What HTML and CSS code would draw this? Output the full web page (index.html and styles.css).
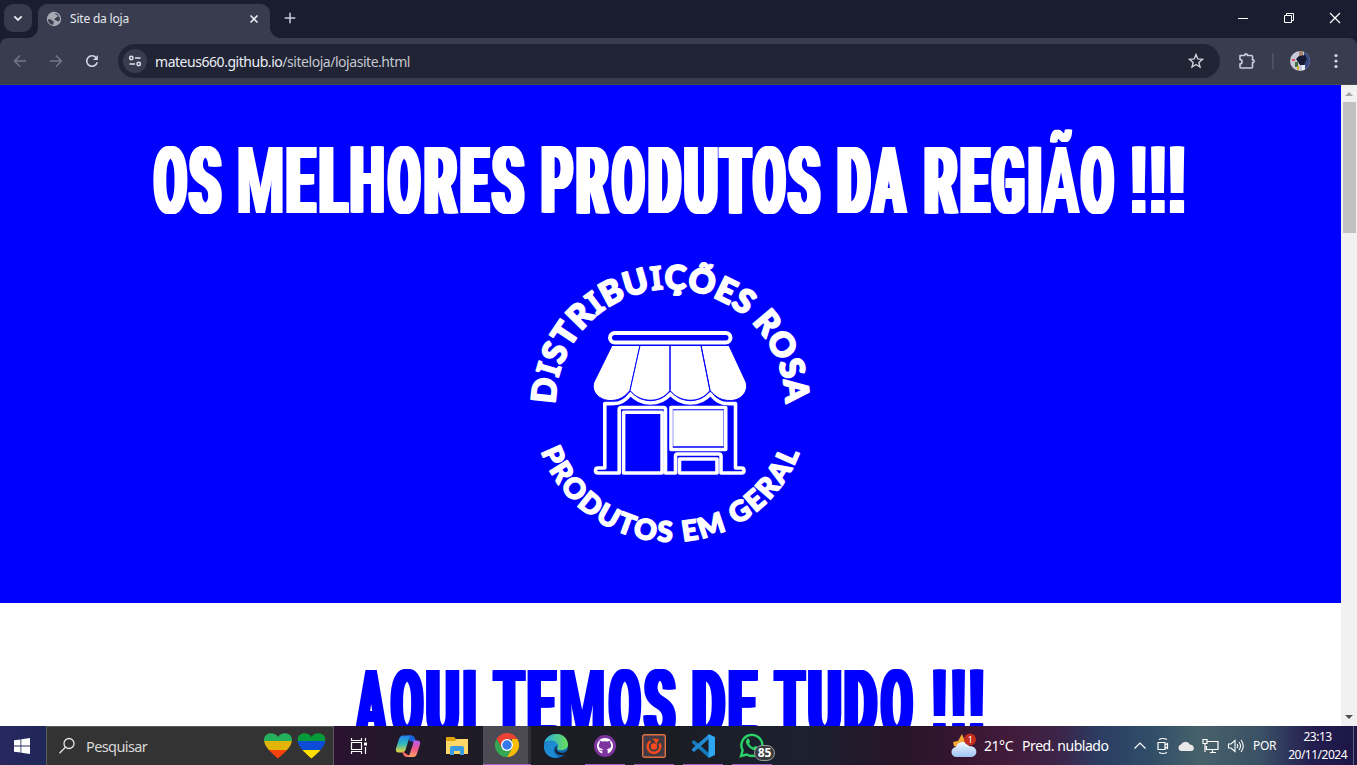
FILE: index.html
```html
<!DOCTYPE html>
<html lang="pt-BR">
<head>
<meta charset="utf-8">
<title>Site da loja</title>
<link rel="stylesheet" href="styles.css">
</head>
<body>
<div class="desktop">
  <header class="tabstrip">
    <div class="tab-search"><svg width="28" height="28" viewBox="0 0 28 28"><path d="M10.300 12.300l3.700 3.700 3.700-3.700" fill="none" stroke="#e6e8ee" stroke-width="1.900"/></svg></div>
    <div class="tab">
      <svg class="globe" width="16" height="16" viewBox="0 0 16 16"><circle cx="8" cy="8" r="7.200" fill="#a6a9b0"/><path d="M2 8.200c2 .1 3.800.2 4.200 1.200.3.900 1.900.6 1.700 1.900-.2.900-.8 1.100-.7 2.500C4 13.600 1.800 11 2 8.200zM8 2.300c2.200 0 3.600.8 4.600 2.300-.5 1.400-1.600.9-2.200 2-.5 1-2 .4-2 1.700 0 1.100 2 .7 2.700 1.600.4.600 1.300.3 2.100.4.800-1.300.9-3 .2-4.600" fill="#3a3e4e"/></svg>
      <span class="tab-title">Site da loja</span>
      <svg class="tab-close" width="10" height="10" viewBox="0 0 10 10"><path d="M1.500 1.500l7 7m0-7l-7 7" stroke="#e6e8ee" stroke-width="1.600"/></svg>
    </div>
    <svg class="new-tab" width="12" height="12" viewBox="0 0 12 12"><path d="M6 .7v10.600M.7 6h10.600" stroke="#c9cde0" stroke-width="1.500"/></svg>
    <div class="window-buttons">
      <svg width="12" height="12" viewBox="0 0 12 12"><path d="M1 6.500h10" stroke="#fff"/></svg>
      <svg width="12" height="12" viewBox="0 0 12 12"><path d="M1.500 3.500h7v7h-7zM3.500 3.500v-2h7v7h-2" fill="none" stroke="#fff"/></svg>
      <svg width="12" height="12" viewBox="0 0 12 12"><path d="M1 1l10 10m0-10L1 11" stroke="#fff" stroke-width="1.200"/></svg>
    </div>
  </header>
  <nav class="toolbar">
    <div class="nav-icons">
      <svg width="14" height="14" viewBox="0 0 14 14"><path d="M13 7H2M7 1.500L1.500 7 7 12.500" fill="none" stroke="#73778a" stroke-width="1.500"/></svg>
      <svg width="14" height="14" viewBox="0 0 14 14"><path d="M1 7h11M7 1.500L12.500 7 7 12.500" fill="none" stroke="#73778a" stroke-width="1.500"/></svg>
      <svg width="14" height="14" viewBox="0 0 14 14"><path d="M12.200 8.200A5.300 5.300 0 1 1 11.200 3.700L12 4.700" fill="none" stroke="#cfd3e4" stroke-width="1.600"/><path d="M12.900 1v4.900H8z" fill="#cfd3e4"/></svg>
    </div>
    <div class="omnibox">
      <div class="site-info"><svg width="14" height="14" viewBox="0 0 14 14" fill="none" stroke="#e1e4ee" stroke-width="1.500"><circle cx="3.300" cy="4" r="1.700"/><path d="M7 4h5.500M1.500 10H7"/><circle cx="10.700" cy="10" r="1.700"/></svg></div>
      <span class="url">mateus660.github.io<span class="url-path">/siteloja/lojasite.html</span></span>
      <svg class="star" width="16" height="16" viewBox="0 0 16 16"><path d="M8 1.600l1.800 4.300 4.700.4-3.600 3.100 1.100 4.600L8 11.500 4 14l1.100-4.600L1.500 6.300l4.700-.4z" fill="none" stroke="#d0d3dc" stroke-width="1.400"/></svg>
    </div>
    <svg class="puzzle" width="18" height="18" viewBox="0 0 18 18"><path d="M2 3.500h4.700V2.600q1.300-1.500 2.600 0v.9H13.500q1 0 1 1v3.400h.9q1.500 1.300 0 2.600h-.9V15q0 1-1 1H3q-1 0-1-1v-3.200a2 2 0 0 0 0-4.200z" fill="none" stroke="#c9cde0" stroke-width="1.600" stroke-linejoin="round"/></svg>
    <span class="divider"></span>
    <svg class="avatar" width="20" height="20" viewBox="0 0 20 20"><defs><clipPath id="face"><circle cx="10" cy="10" r="10"/></clipPath></defs><g clip-path="url(#face)"><path fill="#c9c8d8" d="M0 0h20v20H0z"/><path fill="#394a83" d="M14 0h6v20h-6z"/><path fill="#a88370" d="M9 0h4v6H9z"/><path fill="#171b36" d="M9 5l6-1 2 4-3 6-4 0-4-6z"/><path fill="#d65361" d="M2 8h3v2H2zM5 13h2v2H5z"/><path fill="#3e703b" d="M5 11h3v5H5z"/><path fill="#d5b42c" d="M7 15h2v4H7z"/><path fill="#eceef7" d="M12 14h3v6h-3z"/></g></svg>
    <svg class="dots" width="4" height="16" viewBox="0 0 4 16" fill="#d5d8e4"><circle cx="2" cy="2.500" r="1.600"/><circle cx="2" cy="8" r="1.600"/><circle cx="2" cy="13.500" r="1.600"/></svg>
  </nav>
  <div class="viewport">
    <main class="page">
      <section class="hero">
        <h1 class="poster poster-hero" id="hero-title"></h1>
        <svg class="logo" width="310" height="310" viewBox="515 250 310 310">
          <defs>
            <path id="arc-top" d="M555.500 404A115 115 0 0 1 785.500 404"/>
            <path id="arc-bottom" d="M541 451.500A138 138 0 0 0 800 451.500"/>
          </defs>
          <text class="ring ring-top"><textPath href="#arc-top" textLength="360">D<tspan class="slab">I</tspan>STR<tspan class="slab">I</tspan>BU<tspan class="slab">I</tspan>ÇÕES ROSA</textPath></text>
          <text class="ring ring-bottom"><textPath href="#arc-bottom" textLength="334">PRODUTOS EM GERAL</textPath></text>
          <g fill="none" stroke="#fff" stroke-width="3.600" stroke-linejoin="round">
            <rect x="610" y="333" width="120.500" height="9.500" rx="4.700" stroke-width="4"/>
            <path d="M604.800 403.500V468H598q-2.500 0-2.500 2.500t2.500 2.500H619.200V409.500q0-2 2-2H663.500q2 0 2 2V473h10V456q0-2 2-2h41.500q2 0 2 2v17h20.500q2.500 0 2.500-2.500t-2.500-2.500h-6V403.500q-8 .5-13-.500-7-2-12-9-8 9-20 9t-20-9q-8 9-20 9t-20-9q-5 7-12 9-6 1-13.700.5z"/>
            <path d="M671 407.500h54.700v42H671z"/>
            <path d="M623.600 473V412.200h38.500V473zM679.500 473v-14h37.500v14z"/>
          </g>
          <path fill="#fff" d="M673.200 410.200h50.300v36h-50.300z"/>
          <path fill="#fff" stroke="#00f" d="M612 345.500H640L630 390.500C623 399 617 400.500 610 400.500 600 400.500 590.500 392 594 382z"/>
          <path fill="#fff" stroke="#00f" d="M640 345.500h30v45C660 404 640 403 630 390.500zM670 345.500h31l9 45C700 404 680 403 670 390.500zM701 345.500h28l17 36.500c3 10-5.500 18.500-15.500 18.500-8 0-13.500-2-20.500-10z"/>
        </svg>
      </section>
      <section class="offers"><h2 class="poster poster-offers" id="offers-title"></h2></section>
    </main>
    <div class="scrollbar"><i class="arrow-up"></i><i class="thumb"></i><i class="arrow-down"></i></div>
  </div>
  <footer class="taskbar">
    <div class="start"><svg width="16" height="16" viewBox="0 0 16 16" fill="#fff"><path d="M0 2.300l6.500-.9v6.200H0zM7.300 1.300L16 0v7.600H7.300zM0 8.400h6.500v6.200L0 13.700zM7.300 8.400H16V16l-8.700-1.200z"/></svg></div>
    <div class="search">
      <svg width="18" height="18" viewBox="0 0 18 18" fill="none" stroke="#e4e4e4" stroke-width="1.300"><circle cx="11" cy="6.500" r="5"/><path d="M7.400 10.200L1.500 16.200"/></svg>
      <span class="search-label">Pesquisar</span>
      <svg class="hearts" width="64" height="28" viewBox="0 0 64 28"><defs><clipPath id="heart"><path d="M15 26.500C10 22 1 15 1 8 1 0 12-.5 15 5c3-5.500 14-5 14 3 0 7-9 14-14 18.500z"/></clipPath></defs><g clip-path="url(#heart)"><path fill="#25b15b" d="M0 0h30v9H0z"/><path fill="#e0b408" d="M0 9h30v9H0z"/><path fill="#f9430d" d="M0 18h30v10H0z"/></g><g transform="translate(33.500)" clip-path="url(#heart)"><path fill="#069b38" d="M0 0h30v9H0z"/><path fill="#0d4cd5" d="M0 9h30v9H0z"/><path fill="#ffe000" d="M0 18h30v10H0z"/></g></svg>
    </div>
    <div class="apps">
      <div class="app"><svg width="18" height="16" viewBox="0 0 18 16" fill="none" stroke="#fff" stroke-width="1.200"><path d="M1.500 0v2.500h10V0M1.500 16v-2.500h10V16M1.500 4.500h10v7h-10zM15.500 0v3M15.500 9v7"/><path d="M14 4.500h3v3h-3z" fill="#fff" stroke="none"/></svg></div>
      <div class="app"><svg width="26" height="24" viewBox="0 0 26 24"><defs><linearGradient id="cp1" x2="0" y2="1"><stop stop-color="#2080ef"/><stop offset=".5" stop-color="#32b9bc"/><stop offset="1" stop-color="#f1d336"/></linearGradient><linearGradient id="cp2" x2="0" y2="1"><stop stop-color="#b75cf4"/><stop offset=".5" stop-color="#ee578c"/><stop offset="1" stop-color="#ffa45e"/></linearGradient></defs><path fill="#1b5ed9" d="M12 1.500h5q2 0 3 3l1 3h-6z"/><path fill="url(#cp1)" d="M8 1.500h9q-2 0-3 3l-3 10q-1 4-4 4H4q-4 0-3-4L4 5q1-3.500 4-3.500z"/><path fill="#f56a62" d="M7 17l1 3q1 3 3 3h5z"/><path fill="url(#cp2)" d="M18 6.500h4q4 0 3 4l-3 9q-1 3.500-4 3.500h-7q3 0 4-4l3-9q1-3 0-3.500z"/></svg></div>
      <div class="app"><svg width="22" height="20" viewBox="0 0 22 20"><path fill="#e3a30c" d="M0 1h8l2 2h12v5H0z"/><path fill="#ffd768" d="M0 5h9l2-2h11v15H0z"/><path fill="#3a9be3" d="M4 19v-7q0-2 2-2h10q2 0 2 2v7h-4v-4H8v4z"/></svg></div>
      <div class="app active"><svg width="24" height="24" viewBox="0 0 24 24"><path fill="#ea4335" d="M1.600 6A12 12 0 0 1 22.400 6H12L7 15z"/><path fill="#fbbc05" d="M22.400 6A12 12 0 0 1 12 24l5.200-9L17 6z"/><path fill="#34a853" d="M12 24A12 12 0 0 1 1.600 6l5.200 9L12 18l5.200-3z"/><circle cx="12" cy="12" r="6" fill="#fff"/><circle cx="12" cy="12" r="4.700" fill="#3478e8"/></svg></div>
      <div class="app"><svg width="24" height="24" viewBox="0 0 24 24"><defs><linearGradient id="ed"><stop stop-color="#28a8e0"/><stop offset="1" stop-color="#68df5b"/></linearGradient></defs><circle cx="12" cy="12" r="12" fill="#1266b5"/><path fill="url(#ed)" d="M0 10C2-3 22-4 24 10c0 5-4 7-9 6-3-1-1-2-1-4C13 6 3 5 0 10z"/><path fill="#1c8bd2" d="M0 11c3-6 13-5 14 1-5-1-7 8 1 11C7 26-1 20 0 11z"/><path fill="#1c1d25" d="M13.500 12c-2 2-1.500 5.500 2.500 6.500 3 1 6-.5 7-1.500l1 0v3l-2 0c-4 2-11 1-11-4 0-2 1-4 2.500-4z"/></svg></div>
      <div class="app open"><svg width="22" height="22" viewBox="0 0 22 22"><circle cx="11" cy="11" r="11" fill="#7b359d"/><path fill="#fff" d="M8.300 18.500A8 8 0 1 1 13.700 18.500V15.800l-.6-1.600c5-.8 4.700-4.400 3.200-6.200l0-2.400-2.400 1q-2.900-.7-5.800 0l-2.400-1 0 2.400c-1.500 1.800-1.800 5.400 3.200 6.200l-.6 1.200c-1.500.3-2-.8-3-1.600 .5 1.500 1.200 2.900 3 2.500z"/></svg></div>
      <div class="app open"><svg width="24" height="24" viewBox="0 0 24 24"><rect x=".7" y=".7" width="22.600" height="22.600" rx="2" fill="#443a44" stroke="#e17042" stroke-width="1.400"/><path d="M8.500 7.200A6.300 6.300 0 1 0 17.500 9.500" fill="none" stroke="#ff4b1c" stroke-width="2.400"/><circle cx="12" cy="12.500" r="3.200" fill="#ff4b1c"/><path d="M10.500 4.500l6.500.5-2.500 5z" fill="#ff4b1c"/></svg></div>
      <div class="app open"><svg width="24" height="24" viewBox="0 0 24 24"><path d="M1 7.500l2-1.500L19 20l-1 4L1 9z" fill="#1679bd"/><path d="M1 16.500L3 18 19 4l-1-4L1 15z" fill="#2189cf"/><path d="M17.500 0L24 3v18l-6.500 3z" fill="#2ea6ef"/></svg></div>
      <div class="app open whatsapp"><svg width="25" height="25" viewBox="0 0 25 25"><path d="M2 23l1.600-5.700A10.500 10.500 0 1 1 7.700 21.500z" fill="none" stroke="#29d366" stroke-width="2.400"/><path d="M7.500 7c1-2 2.400-1.600 2.800-.3l.7 1.800c.2.900-.5 1.300-1 2 1 2 2.500 3.200 4.500 4 1-1 1.400-2 2.600-1.300l1.900 1c.8.500-.3 2.600-1.700 3.100-3.600 1-9.300-3.700-10.300-7.700-.2-1 0-2 .5-2.600z" fill="#29d366"/></svg><span class="badge">85</span></div>
    </div>
    <div class="weather">
      <svg width="26" height="26" viewBox="0 0 26 26"><defs><linearGradient id="cl" x2="0" y2="1"><stop stop-color="#f4f8ff"/><stop offset="1" stop-color="#9dc2f1"/></linearGradient></defs><path d="M11 1l2 5 3 6-8 3-5-2-1-4 5-1z" fill="#f5a936"/><path d="M6 24a5 5 0 0 1-1-10 7 7 0 0 1 13-1c10 0 9 11 2 11z" fill="url(#cl)"/><circle cx="19" cy="6.500" r="6" fill="#c42b1c"/><text x="19" y="10" class="alert">1</text></svg>
      <span class="temp">21°C</span><span class="forecast">Pred. nublado</span>
    </div>
    <div class="tray">
      <svg width="14" height="18" viewBox="0 0 14 18" fill="none" stroke="#fff" stroke-width="1.200"><path d="M1.500 11.500L7 6l5.500 5.500"/></svg>
      <svg width="14" height="18" viewBox="0 0 14 18" fill="none" stroke="#fff" stroke-width="1.200"><path d="M3 2.500q4-2 8 0M3 15.500q4 2 8 0M2 5.500h7v7H2zM9 8l2.500-1.500v5L9 10"/></svg>
      <svg class="cloud" width="16" height="18" viewBox="0 0 16 18"><path d="M3.500 14a3.300 3.300 0 0 1-.5-6.500A5 5 0 0 1 12 7.500c5 .5 5 6.500 1 6.500z" fill="#e9e9e9"/></svg>
      <svg width="17" height="18" viewBox="0 0 17 18" fill="none" stroke="#fff" stroke-width="1.200"><path d="M5 4.500h11v8H4.500V9M8 15.500h6M10.500 12.500v3M1 2.500h4v4H1zM3 6.500V15"/></svg>
      <svg width="18" height="18" viewBox="0 0 18 18" fill="none" stroke="#fff" stroke-width="1.100"><path d="M1.500 7h2.500L8 3.500v11L4 11H1.500zM10 7q1.500 2 0 4M12 5q3 4 0 8M14 3q4.500 6 0 12"/></svg>
    </div>
    <span class="lang">POR</span>
    <div class="clock"><span class="time">23:13</span><span class="date">20/11/2024</span></div>
    <span class="peek"></span>
  </footer>
</div>
<script src="poster.js"></script>
</body>
</html>
```

FILE: poster.js
```js
// Sets condensed poster headings: every letter is narrowed to its own slot.
// Each entry is [letter, left edge, right edge] in pixels from the page's left side.
const HERO = [
  ["O",153,187.7],["S",188.3,222.2],[" ",222.2,238],
  ["M",238,283],["E",286.4,317.5],["L",319.2,349.6],["H",350.3,384.4],["O",387.1,421.3],["R",424,458.8],["E",460.5,491],["S",491.3,525],[" ",525,541],
  ["P",541,574],["R",576,610.3],["O",611,645.4],["D",648.1,682],["U",684.1,717.9],["T",717.7,752.3],["O",752.3,786.7],["S",787,820.8],[" ",820.8,836.7],
  ["D",836.7,871],["A",870.6,908.6],[" ",908.6,923.8],
  ["R",923.8,959],["E",959.8,991],["G",991.6,1025.7],["I",1028,1041.5],["Ã",1042.2,1080.6],["O",1080.4,1115],[" ",1115,1132],
  ["!",1132,1145.7],["!",1151,1165],["!",1170.3,1184.5]
];
const OFFERS = [
  ["A",353.5,388],["Q",389.7,423.8],["U",426.3,459.5],["I",463,476],[" ",476,492],
  ["T",492,526],["E",527.3,557.6],["M",560,604.3],["O",607.7,641.4],["S",642.6,675.5],[" ",675.5,692.3],
  ["D",692.3,726],["E",728.5,758.8],[" ",758.8,773.5],
  ["T",773.5,806.8],["U",808,841.3],["D",844.2,878],["O",880.4,914],[" ",914,933],
  ["!",933,946],["!",951.7,964.8],["!",970.5,984]
];
const HEAVY = 12;
const LIGHT = 6;

function setPoster(id, letters) {
  const heading = document.getElementById(id);
  const ctx = document.createElement("canvas").getContext("2d");
  heading.style.paddingLeft = letters[0][1] + "px";
  letters.forEach(([char, left, right], i) => {
    const span = document.createElement("span");
    const light = "MÃ".includes(char);
    span.className = "letter";
    if (light) span.classList.add("light");
    // The exclamation mark uses a face with a square dot.
    if (char === "!") span.classList.add("square");
    span.textContent = char;
    const next = letters[i + 1];
    span.style.width = (next ? next[1] - left : right - left) + "px";
    heading.appendChild(span);
    if (char !== " ") {
      const extra = light ? LIGHT : HEAVY;
      const style = getComputedStyle(span);
      ctx.font = style.fontWeight + " " + style.fontSize + " " + style.fontFamily;
      const m = ctx.measureText(char === "Ã" ? "A" : char);
      const ink = m.actualBoundingBoxLeft + m.actualBoundingBoxRight + extra;
      const scale = (right - left) / ink;
      const shift = (m.actualBoundingBoxLeft + extra / 2) * scale;
      span.style.transform = `translateX(${shift}px) scaleX(${scale})`;
    }
  });
}
setPoster("hero-title", HERO);
setPoster("offers-title", OFFERS);
```

FILE: styles.css
```css
* { box-sizing: border-box; }
body { margin: 0; overflow: hidden; font-family: "Noto Sans", "Open Sans", sans-serif; }
svg { display: block; flex: none; }
.desktop { width: 1357px; height: 765px; display: flex; flex-direction: column; background: #191d30; }

.tabstrip { height: 38px; flex: none; display: flex; background: #191d30; }
.tab-search { width: 28px; height: 28px; margin: 4px 6px 0 4px; border-radius: 9px; background: #353a4c; }
.tab { position: relative; width: 232px; height: 34px; margin-top: 4px; padding: 0 11px 5px 8px; display: flex; align-items: center; background: #383c4e; border-radius: 9px 9px 0 0; }
.tab::before, .tab::after { content: ""; position: absolute; bottom: 0; width: 10px; height: 10px; }
.tab::before { left: -10px; background: radial-gradient(circle at 0 0, transparent 9.500px, #383c4e 10px); }
.tab::after { right: -10px; background: radial-gradient(circle at 100% 0, transparent 9.500px, #383c4e 10px); }
.tab-title { margin-left: 8px; font-size: 12px; letter-spacing: -.2px; color: #e6e8ee; }
.tab-close { margin-left: auto; }
.new-tab { margin: 12px 0 0 14px; }
.window-buttons { margin: 12px 16px 0 auto; display: flex; gap: 34px; }

.toolbar { height: 47px; flex: none; display: flex; align-items: center; background: #383c4e; border-radius: 8px 8px 0 0; border-bottom: 1px solid #474a50; }
.nav-icons { width: 118px; padding-left: 13px; display: flex; gap: 22px; }
.omnibox { width: 1102px; height: 34px; padding: 0 16px 0 5px; display: flex; align-items: center; border-radius: 17px; background: #202434; }
.site-info { width: 24px; height: 24px; display: grid; place-items: center; border-radius: 50%; background: #383c4e; }
.url { margin-left: 8px; font-size: 14px; letter-spacing: -.46px; color: #eceef5; white-space: nowrap; }
.url-path { color: #c4c7cf; }
.star { margin-left: auto; }
.puzzle { margin-left: 18px; }
.divider { width: 2px; height: 16px; margin-left: 16px; background: #4c5060; }
.avatar { margin-left: 16px; }
.dots { margin-left: 24px; }

.viewport { height: 641px; flex: none; display: flex; overflow: hidden; }
.page { width: 1341px; height: 641px; overflow: hidden; background: #fff; }
.hero { height: 518px; background: #00f; display: flow-root; }
.poster { margin: 0; height: 80px; font: 700 93px/80px Roboto, sans-serif; white-space: nowrap; }
.poster-hero { color: #fff; margin-top: 55px; }
.poster-offers { color: #00f; }
.letter { display: inline-block; white-space: pre; transform-origin: 0 50%; text-shadow: -6px 0, -4px 0, -2px 0, 2px 0, 4px 0, 6px 0; }
.light { text-shadow: -3px 0, -1.5px 0, 1.5px 0, 3px 0; }
.square { font-family: "Liberation Sans", sans-serif; font-size: 96px; }
.logo { margin: 30px 0 0 515px; }
.offers { padding-top: 60px; }
.ring { fill: #fff; stroke: #fff; stroke-linejoin: round; font-family: Lato, sans-serif; font-weight: 900; }
.ring-top { font-size: 33px; stroke-width: 2px; }
.ring-bottom { font-size: 28px; stroke-width: 1.6px; }
.slab { font-family: "Noto Sans", sans-serif; font-weight: 700; stroke-width: 1px; }

.scrollbar { width: 16px; display: flex; flex-direction: column; align-items: center; background: #f1f1f1; }
.arrow-up { margin: 7px 0 6px; border: 4px solid transparent; border-top: 0; border-bottom-color: #a3a3a3; }
.thumb { width: 13px; height: 131px; background: #c1c1c1; }
.arrow-down { margin: auto 0 7px; border: 4px solid transparent; border-bottom: 0; border-top-color: #505050; }

.taskbar { height: 39px; flex: none; display: flex; align-items: center; color: #fff; background: linear-gradient(90deg, #28275f 0, #1f2857 46px, #2a1230 334px, #211a29 410px, #1d1c25 500px, #1b1d25 680px, #1b2130 800px, #271528 900px, #34152f 950px, #431b3b 1010px, #3b2549 1060px, #2b3d63 1100px, #304d68 1150px, #47616a 1200px, #3b5166 1260px, #241f50 1310px, #1b1546 1357px); }
.start { width: 46px; display: grid; place-items: center; padding-right: 2px; }
.search { width: 288px; height: 39px; padding: 0 6px 0 11px; display: flex; align-items: center; background: #333; border: 1px solid #5c5c5c; border-bottom: 0; }
.search-label { margin-left: 10px; font-size: 14.5px; letter-spacing: -.6px; color: #d8d8d8; }
.hearts { margin-left: auto; }
.apps { display: flex; height: 39px; }
.app { width: 49px; height: 39px; display: grid; place-items: center; position: relative; }
.active { background: linear-gradient(90deg, #4c4b53 45px, #303038 45px); border-bottom: 1px solid #a45ec2; margin-left: 2px; width: 48px; }
.open::after { content: ""; position: absolute; left: 5px; right: 4px; bottom: 0; height: 1px; background: #a45ec2; }
.badge { position: absolute; left: 27px; top: 19px; width: 21px; height: 16px; border: 1px solid #999; border-radius: 8px; background: #3a3b3d; font: 700 12px/14px "Noto Sans", sans-serif; text-align: center; }
.weather { width: 182px; margin-left: 175px; display: flex; align-items: center; font-size: 14px; letter-spacing: -.45px; white-space: nowrap; }
.temp { margin-left: 7px; }
.forecast { margin-left: 9px; }
.alert { font-size: 9px; fill: #fff; text-anchor: middle; }
.tray { display: flex; align-items: center; gap: 8px; }
.tray svg:nth-child(2) { margin-left: 1px; }
.lang { margin-left: 8px; font-size: 12px; letter-spacing: -.3px; }
.clock { margin-left: auto; display: flex; flex-direction: column; align-items: center; font-size: 12px; line-height: 18px; letter-spacing: -.5px; }
.peek { width: 1px; height: 39px; margin: 0 3px 0 6px; background: #67628a; }
```
